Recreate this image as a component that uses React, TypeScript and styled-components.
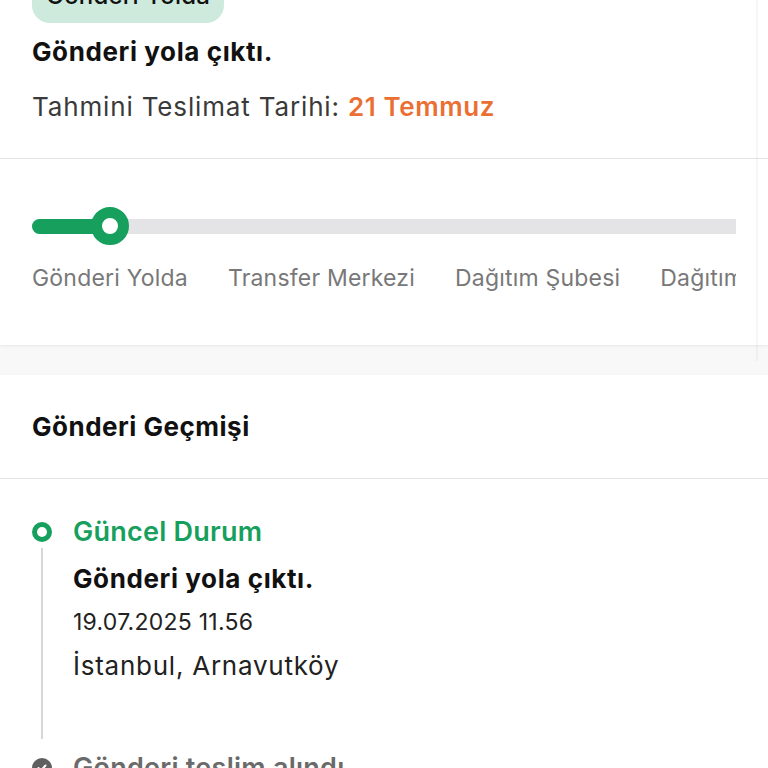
import React from "react";
import styled, { createGlobalStyle } from "styled-components";

const Global = createGlobalStyle`
  html, body { margin: 0; padding: 0; background: #f8f8f8; }
  body { font-family: Inter, "Noto Sans", "Liberation Sans", sans-serif; -webkit-font-smoothing: antialiased; }
  * { box-sizing: border-box; }
`;

const Page = styled.div`
  width: 768px;
  height: 768px;
  overflow: hidden;
  display: flex;
  flex-direction: column;
  gap: 30px;
`;

const Card = styled.section`
  position: relative;
  background: #fff;
  box-shadow: 0 1px 3px rgba(0, 0, 0, 0.07);
`;

const ScrollTrack = styled.div`
  position: absolute;
  top: 0;
  bottom: -16px;
  right: 10px;
  width: 2px;
  background: rgba(0, 0, 0, 0.035);
`;

const Summary = styled.div`
  display: flex;
  flex-direction: column;
  align-items: flex-start;
  padding: 0 32px;
  height: 159px;
  border-bottom: 1px solid #e2e2e2;
`;

const Badge = styled.div`
  margin-top: -19px;
  height: 42px;
  padding: 0 14px;
  border-radius: 18px;
  background: #cdeadd;
  color: #111;
  font-size: 24px;
  font-weight: 500;
  letter-spacing: 0.2px;
  line-height: 30px;
  display: flex;
  align-items: flex-start;
`;

const Title = styled.div`
  margin-top: 14px;
  font-size: 26px;
  font-weight: 700;
  color: #111;
  line-height: 30px;
  letter-spacing: 0.6px;
`;

const Eta = styled.div`
  margin-top: 25px;
  font-size: 26px;
  color: #3a3a3a;
  line-height: 30px;
  letter-spacing: 0.85px;
`;

const EtaDate = styled.span`
  color: #ea6f33;
  font-weight: 600;
  letter-spacing: 0.6px;
`;

const ProgressArea = styled.div`
  height: 186px;
  padding: 48px 32px 0;
  display: flex;
  flex-direction: column;
`;

const Track = styled.div`
  height: 38px;
  display: flex;
  align-items: center;
`;

const TrackBar = styled.div`
  flex: 1;
  height: 15px;
  border-radius: 8px 0 0 8px;
  background: #e4e4e6;
  display: flex;
  align-items: center;
`;

const Fill = styled.div`
  height: 15px;
  border-radius: 8px 0 0 8px;
  background: #17a05d;
  display: flex;
  align-items: center;
  justify-content: flex-end;
`;

const Knob = styled.div`
  width: 38px;
  height: 38px;
  margin-right: -19px;
  flex-shrink: 0;
  border-radius: 50%;
  border: 11.5px solid #17a05d;
  background: #fff;
`;

const Steps = styled.div`
  margin-top: 18px;
  display: flex;
  gap: 40px;
  overflow: hidden;
  white-space: nowrap;
`;

const Step = styled.div`
  font-size: 23px;
  letter-spacing: 0.2px;
  line-height: 30px;
  color: #787878;
  flex-shrink: 0;
`;

const HistoryHeader = styled.div`
  height: 104px;
  padding: 0 32px;
  display: flex;
  align-items: center;
  border-bottom: 1px solid #e2e2e2;
  font-size: 26px;
  font-weight: 700;
  letter-spacing: 0.5px;
  color: #111;
`;

const Timeline = styled.div`
  padding: 38px 32px 0;
  display: flex;
  flex-direction: column;
`;

const Item = styled.div`
  display: flex;
  gap: 21px;
`;

const Rail = styled.div`
  width: 20px;
  display: flex;
  flex-direction: column;
  align-items: center;
  padding-top: 5px;
`;

const Dot = styled.div<{ $active?: boolean }>`
  width: 20px;
  height: 20px;
  border-radius: 50%;
  flex-shrink: 0;
  ${(p) =>
    p.$active
      ? `border: 5.5px solid #17a05d; background: #fff;`
      : `background: #5f5f5f; display:flex; align-items:center; justify-content:center;`}
`;

const Line = styled.div`
  width: 2px;
  flex: 1;
  margin: 6px 0 14px;
  background: #d6d6d6;
`;

const Body = styled.div`
  display: flex;
  flex-direction: column;
  padding-bottom: 42px;
`;

const ItemTitle = styled.div<{ $active?: boolean }>`
  font-size: 27px;
  font-weight: 600;
  letter-spacing: 0.25px;
  line-height: 30px;
  color: ${(p) => (p.$active ? "#17a05d" : "#6a6a6a")};
`;

const ItemDesc = styled.div`
  margin-top: 17px;
  font-size: 26px;
  font-weight: 700;
  letter-spacing: 0.6px;
  color: #111;
  line-height: 30px;
`;

const ItemDate = styled.div`
  margin-top: 13px;
  font-size: 23px;
  letter-spacing: 0.25px;
  color: #222;
  line-height: 30px;
`;

const ItemPlace = styled.div`
  margin-top: 14px;
  font-size: 26px;
  letter-spacing: 0.75px;
  color: #222;
  line-height: 30px;
  height: 60px;
`;

export default function App() {
  return (
    <>
      <Global />
      <Page>
        <Card>
          <ScrollTrack />
          <Summary>
            <Badge>Gönderi Yolda</Badge>
            <Title>Gönderi yola çıktı.</Title>
            <Eta>
              Tahmini Teslimat Tarihi: <EtaDate>21 Temmuz</EtaDate>
            </Eta>
          </Summary>
          <ProgressArea>
            <Track>
              <TrackBar>
                <Fill style={{ width: "78px" }}>
                  <Knob />
                </Fill>
              </TrackBar>
            </Track>
            <Steps>
              <Step>Gönderi Yolda</Step>
              <Step>Transfer Merkezi</Step>
              <Step>Dağıtım Şubesi</Step>
              <Step>Dağıtımda</Step>
              <Step>Teslim Edildi</Step>
            </Steps>
          </ProgressArea>
        </Card>
        <Card>
          <HistoryHeader>Gönderi Geçmişi</HistoryHeader>
          <Timeline>
            <Item>
              <Rail>
                <Dot $active />
                <Line />
              </Rail>
              <Body>
                <ItemTitle $active>Güncel Durum</ItemTitle>
                <ItemDesc>Gönderi yola çıktı.</ItemDesc>
                <ItemDate>19.07.2025 11.56</ItemDate>
                <ItemPlace>İstanbul, Arnavutköy</ItemPlace>
              </Body>
            </Item>
            <Item>
              <Rail>
                <Dot>
                  <svg width="12" height="12" viewBox="0 0 24 24" fill="none" stroke="#fff" strokeWidth="4" strokeLinecap="round" strokeLinejoin="round">
                    <path d="M5 12l5 5L19 7" />
                  </svg>
                </Dot>
              </Rail>
              <Body>
                <ItemTitle>Gönderi teslim alındı</ItemTitle>
              </Body>
            </Item>
          </Timeline>
        </Card>
      </Page>
    </>
  );
}
